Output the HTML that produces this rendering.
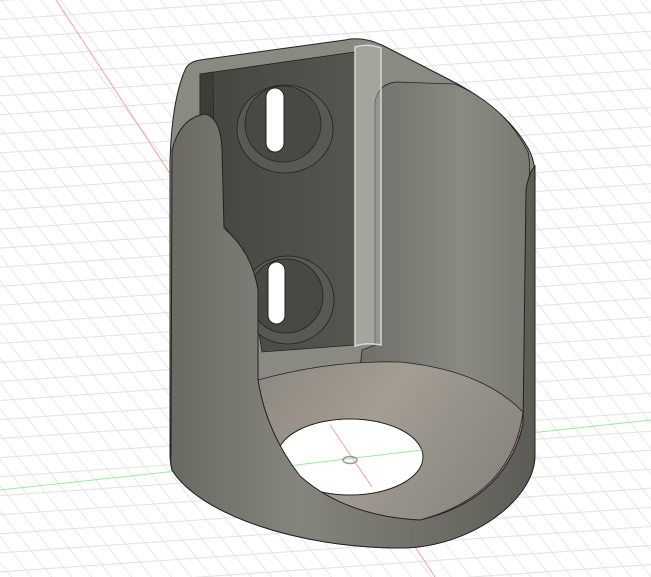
<!DOCTYPE html>
<html><head><meta charset="utf-8"><style>html,body{margin:0;padding:0;background:#fff;overflow:hidden}svg{display:block}</style></head>
<body>
<svg width="651" height="577" viewBox="0 0 651 577" xmlns="http://www.w3.org/2000/svg">
<defs>
<pattern id="g" width="19" height="19" patternUnits="userSpaceOnUse" patternTransform="rotate(-4) skewX(34)">
<path d="M0 0.5H19M0.5 0V19" stroke="#e2e2e2" stroke-width="1" fill="none"/>
</pattern>
<linearGradient id="front" x1="0" x2="1" y1="0" y2="0">
<stop offset="0" stop-color="#6a6a63"/><stop offset="0.35" stop-color="#85857d"/><stop offset="0.75" stop-color="#6d6c65"/><stop offset="1" stop-color="#5c5b55"/>
</linearGradient>
<linearGradient id="back" x1="0" x2="1">
<stop offset="0" stop-color="#46443f"/><stop offset="1" stop-color="#57554f"/>
</linearGradient>
<linearGradient id="rw" x1="0" x2="1">
<stop offset="0" stop-color="#6f6e68"/><stop offset="0.6" stop-color="#8a8a83"/><stop offset="1" stop-color="#7a7972"/>
</linearGradient>
<linearGradient id="fl" x1="0" x2="1" y1="0" y2="0.4">
<stop offset="0" stop-color="#8d887f"/><stop offset="0.5" stop-color="#a39d93"/><stop offset="1" stop-color="#8c8880"/>
</linearGradient>
</defs>
<rect width="651" height="577" fill="#fff"/>
<rect width="651" height="577" fill="url(#g)"/>
<line x1="56" y1="0" x2="435" y2="577" stroke="#f3a0a0" stroke-width="1"/>
<line x1="0" y1="490" x2="651" y2="420" stroke="#9fe89f" stroke-width="1"/>

<path d="M185,70 Q188,62 200,60 L345,40 Q362,36 382,45 L450,80 Q505,108 528,148 Q536,162 535,182 L535,455 C535,500 470,548 400,548 C300,548 200,515 172,470 Q170,462 170,455 L170,160 Q172,100 185,70 Z" fill="#8b8a82" stroke="#222" stroke-width="1"/>
<path d="M200,74 L355,52 L355,345 L262,352 L248,262 Q232,232 216,218 L212,130 L200,140 Z" fill="url(#back)" stroke="#222" stroke-width="0.8"/>
<path d="M200,74 L213,72 L215,215 L200,225 Z" fill="#3e3c37" stroke="#222" stroke-width="0.6"/>
<ellipse cx="285" cy="129" rx="48" ry="44" fill="#5a5852" stroke="#222" stroke-width="0.8"/>
<ellipse cx="283" cy="124" rx="38" ry="38" fill="#4a4843" stroke="#222" stroke-width="0.8"/>
<rect x="266" y="88" width="18" height="64" rx="9" fill="#fff" stroke="#222"/>
<ellipse cx="288" cy="300" rx="46" ry="44" fill="#5a5852" stroke="#222" stroke-width="0.8"/>
<ellipse cx="286" cy="296" rx="37" ry="37" fill="#4a4843" stroke="#222" stroke-width="0.8"/>
<rect x="268" y="262" width="17" height="62" rx="8.5" fill="#fff" stroke="#222"/>
<path d="M375,102 Q378,84 396,82 L455,84 Q505,106 528,152 Q532,172 526,200 L524,440 L360,368 L362,350 L375,345 Z" fill="url(#rw)" stroke="#222" stroke-width="0.8"/>
<path d="M258,380 Q330,360 400,362 Q482,370 523,412 Q512,495 420,520 Q340,516 300,476 Q266,432 258,380 Z" fill="url(#fl)" stroke="#222" stroke-width="0.8"/>
<ellipse cx="350" cy="457" rx="73" ry="38" fill="#fff" stroke="#222" stroke-width="1"/>
<line x1="330" y1="425" x2="372" y2="487" stroke="#f3a0a0"/>
<line x1="280" y1="467" x2="422" y2="450" stroke="#9fe89f"/>
<ellipse cx="350" cy="460" rx="7" ry="3.5" fill="none" stroke="#999" stroke-width="1.5"/>
<path d="M172,150 Q180,118 205,114 Q221,118 222,150 L224,228 Q252,252 258,290 L258,380 Q266,432 300,476 Q345,516 420,520 Q505,500 523,425 L526,190 Q529,172 535,166 L535,455 C535,500 470,548 400,548 C300,548 200,515 172,470 Q170,462 171,455 Z" fill="url(#front)" stroke="#222" stroke-width="1"/>
<path d="M355,47 Q368,43 381,48 L381,345 Q368,342 355,346 Z" fill="rgba(215,215,212,0.35)" stroke="#d6d6d6" stroke-width="1.5"/>
</svg>
</body></html>
